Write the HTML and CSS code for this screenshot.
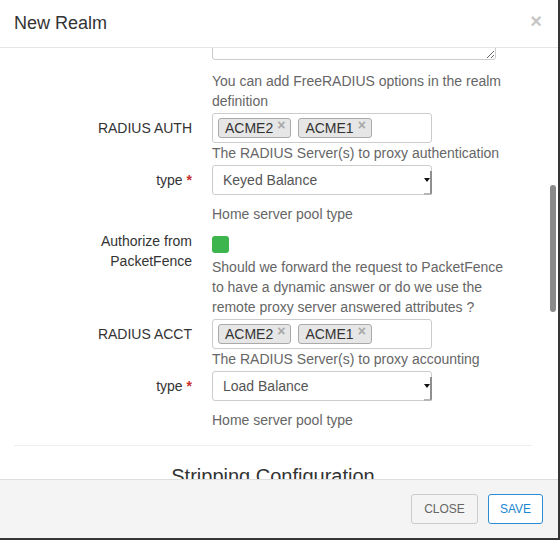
FILE: index.html
```html
<!DOCTYPE html>
<html>
<head>
<meta charset="utf-8">
<link rel="stylesheet" href="styles.css">
</head>
<body>
<div class="modal">
  <div class="modal-header">
    <h4 class="modal-title">New Realm</h4>
    <span class="close">×</span>
  </div>
  <div class="modal-body">
    <div class="body-content">
      <div class="group first">
        <div class="label"></div>
        <div class="control">
          <textarea class="textarea"></textarea>
          <div class="help help-top">You can add FreeRADIUS options in the realm definition</div>
        </div>
      </div>

      <div class="group">
        <div class="label">RADIUS AUTH</div>
        <div class="control">
          <div class="tags">
            <span class="tag">ACME2<span class="tag-x">×</span></span>
            <span class="tag">ACME1<span class="tag-x">×</span></span>
          </div>
          <div class="help">The RADIUS Server(s) to proxy authentication</div>
        </div>
      </div>

      <div class="group">
        <div class="label">type <span class="req">*</span></div>
        <div class="control">
          <div class="select">Keyed Balance<span class="arrow"></span></div>
          <div class="help help-gap">Home server pool type</div>
        </div>
      </div>

      <div class="group">
        <div class="label">Authorize from PacketFence</div>
        <div class="control">
          <span class="check"></span>
          <div class="help help-check">Should we forward the request to PacketFence to have a dynamic answer or do we use the remote proxy server answered attributes ?</div>
        </div>
      </div>

      <div class="group">
        <div class="label">RADIUS ACCT</div>
        <div class="control">
          <div class="tags">
            <span class="tag">ACME2<span class="tag-x">×</span></span>
            <span class="tag">ACME1<span class="tag-x">×</span></span>
          </div>
          <div class="help">The RADIUS Server(s) to proxy accounting</div>
        </div>
      </div>

      <div class="group">
        <div class="label">type <span class="req">*</span></div>
        <div class="control">
          <div class="select">Load Balance<span class="arrow"></span></div>
          <div class="help help-gap">Home server pool type</div>
        </div>
      </div>

      <hr class="divider">
      <h3 class="section-title">Stripping Configuration</h3>
    </div>
    <div class="scrollbar"><div class="thumb"></div></div>
  </div>
  <div class="modal-footer">
    <button class="btn btn-close">CLOSE</button>
    <button class="btn btn-save">SAVE</button>
  </div>
</div>
</body>
</html>
```
FILE: styles.css
```css
* { box-sizing: border-box; }
html, body { margin: 0; padding: 0; }
body {
  width: 560px;
  height: 540px;
  background: #363636;
  font-family: "Liberation Sans", Arial, sans-serif;
  font-size: 14px;
  line-height: 20px;
  color: #333;
  overflow: hidden;
}
.modal {
  width: 558px;
  height: 538px;
  background: #fff;
  display: flex;
  flex-direction: column;
}
.modal-header {
  height: 48px;
  flex: none;
  border-bottom: 1px solid #e5e5e5;
  display: flex;
  align-items: center;
  justify-content: space-between;
  padding: 0 16px 0 14px;
}
.modal-title {
  margin: 0;
  font-size: 18px;
  font-weight: normal;
  line-height: 25px;
  color: #333;
}
.close {
  font-size: 20px;
  font-weight: bold;
  color: #c6c6c6;
  line-height: 20px;
  margin-top: -6px;
}
.modal-body {
  flex: 1;
  display: flex;
  overflow: hidden;
}
.body-content {
  flex: 1;
  overflow: hidden;
  padding: 0 14px;
}
.scrollbar {
  width: 12px;
  flex: none;
  background: #fff;
}
.thumb {
  width: 6px;
  height: 127px;
  margin: 137px 0 0 4px;
  background: #8a8a8a;
  border-radius: 4px;
}
.group {
  display: grid;
  grid-template-columns: 178px 320px;
  column-gap: 20px;
  margin-top: 2px;
}
.group.first { margin-top: 0; }
.label {
  text-align: right;
  padding: 5px 0 0 15px;
  color: #333;
}
.req { color: #c9302c; font-weight: bold; }
.control { display: flex; flex-direction: column; align-items: flex-start; }
.textarea {
  display: block;
  width: 284px;
  height: 54px;
  margin: -42px 0 0 0;
  border: 1px solid #ccc;
  border-radius: 3px;
  resize: vertical;
  font: inherit;
  background: #fff;
}
.help {
  color: #666;
  width: 300px;
}
.help-top { margin-top: 11px; }
.help-gap { margin-top: 9px; }
.help-check { margin-top: 4px; }
.tags {
  width: 220px;
  height: 30px;
  border: 1px solid #ccc;
  border-radius: 3px;
  display: flex;
  align-items: flex-start;
  gap: 7px;
  padding: 4px 5px;
}
.tag {
  display: inline-flex;
  align-items: flex-start;
  height: 20px;
  border: 1px solid #aaa;
  border-radius: 3px;
  background: #e6e6e6;
  padding: 0 5px 0 6px;
  color: #333;
  line-height: 18px;
}
.tag-x {
  color: #a8a8a8;
  font-weight: bold;
  font-size: 14px;
  line-height: 13px;
  margin-left: 4px;
}
.select {
  width: 220px;
  height: 30px;
  border: 1px solid #ccc;
  border-radius: 3px;
  display: flex;
  align-items: center;
  justify-content: space-between;
  padding: 0 0 0 10px;
  color: #555;
}
.arrow {
  width: 8px;
  height: 24px;
  align-self: flex-end;
  border-right: 2px solid #8f8f8f;
  border-bottom: 2px solid #b5b5b5;
  border-bottom-right-radius: 2px;
  display: flex;
  align-items: center;
  justify-content: center;
  margin-right: -1px;
  margin-bottom: -1px;
}
.arrow::before {
  content: "";
  border-left: 3px solid transparent;
  border-right: 3px solid transparent;
  border-top: 4px solid #111;
  margin-top: -4px;
}
.check {
  display: block;
  width: 17px;
  height: 17px;
  margin-top: 10px;
  background: #3db54f;
  border-radius: 3px;
}
.divider {
  margin: 15px 0 0 0;
  border: 0;
  border-top: 1px solid #eee;
}
.section-title {
  margin: 19px 0 0 0;
  text-align: center;
  font-size: 20px;
  font-weight: normal;
  line-height: 22px;
  color: #333;
}
.modal-footer {
  height: 59px;
  flex: none;
  border-top: 1px solid #ddd;
  background: #f4f4f4;
  display: flex;
  align-items: center;
  justify-content: flex-end;
  gap: 10px;
  padding: 0 15px;
}
.btn {
  height: 30px;
  font-family: "Liberation Sans", Arial, sans-serif;
  font-size: 12px;
  border-radius: 3px;
  cursor: pointer;
}
.btn-close {
  background: #f4f4f4;
  border: 1px solid #ccc;
  color: #666;
  padding: 0 12px;
}
.btn-save {
  background: #fff;
  border: 1px solid #2a8dd4;
  color: #1a86d0;
  padding: 0 11px;
}
```
